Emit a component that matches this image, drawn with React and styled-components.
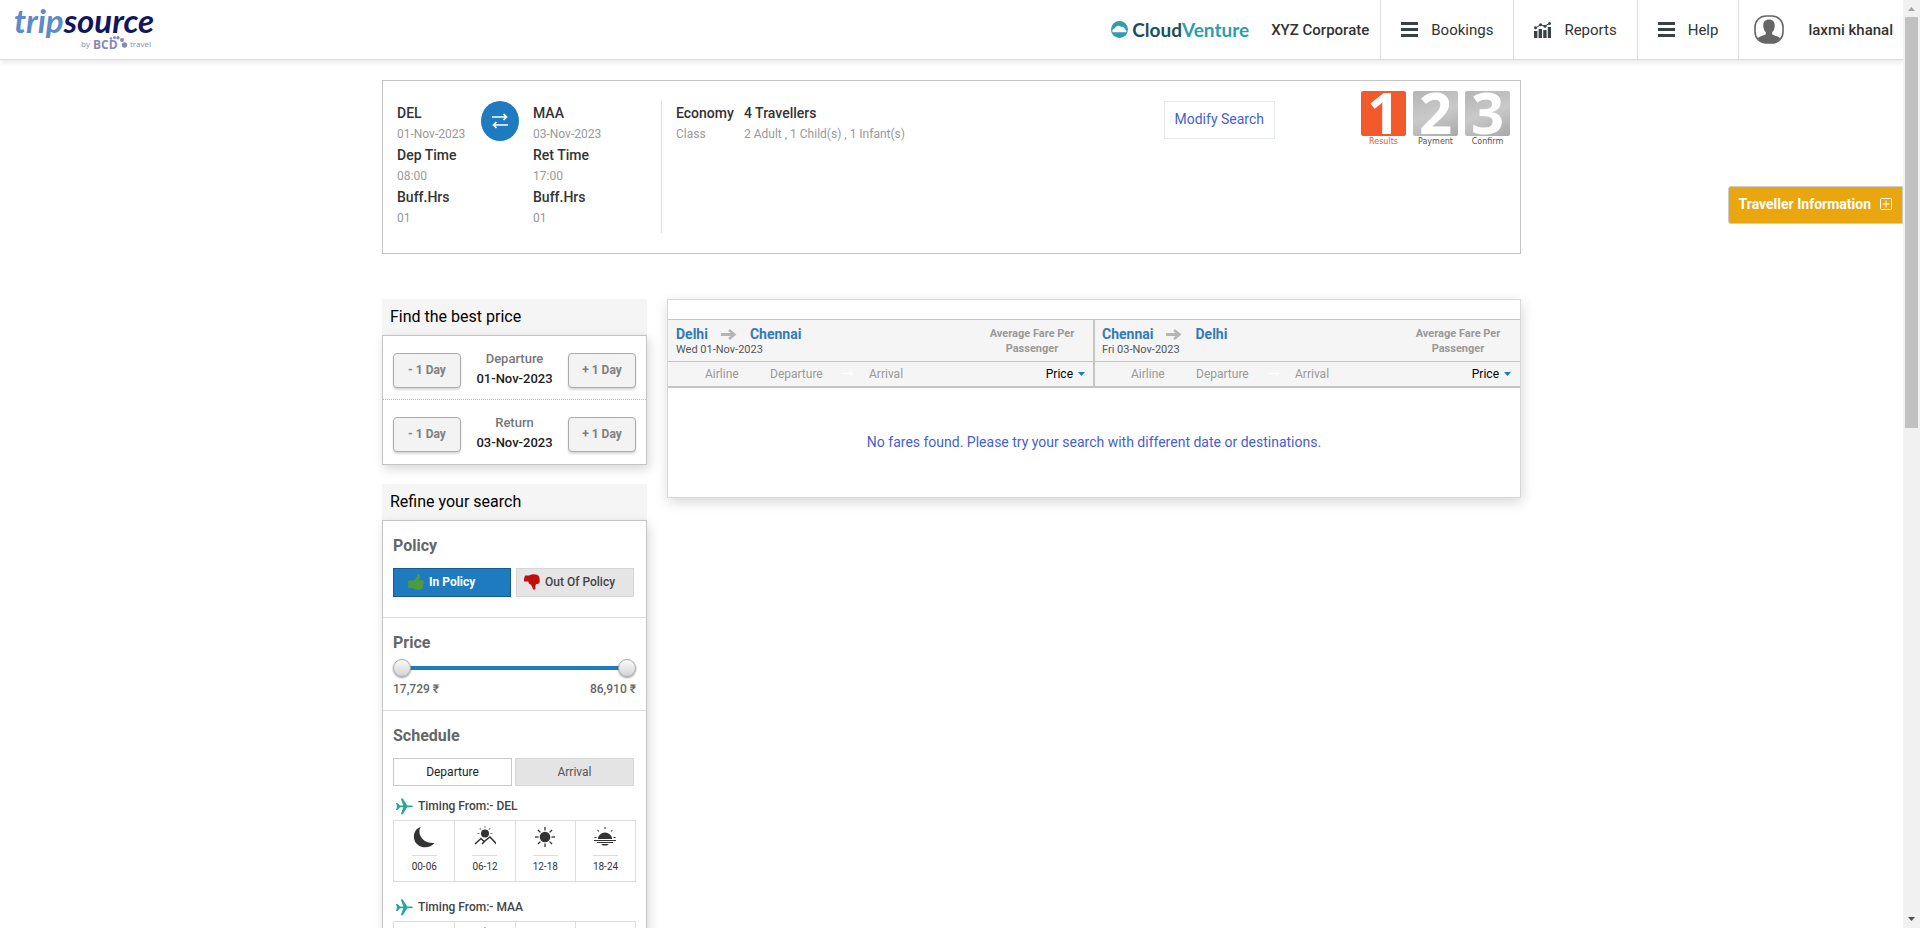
import React, { useState } from "react";
import styled, { createGlobalStyle, css } from "styled-components";

const Global = createGlobalStyle`
  *, *::before, *::after { box-sizing: border-box; }
  body {
    margin: 0;
    background: #fff;
    color: #333;
    font: 400 12px/20px Roboto, "Liberation Sans", sans-serif;
  }
  button, input { font: inherit; }
  button { cursor: pointer; }
  h2, h3, p, ol, dl, dd { margin: 0; padding: 0; }
`;

const Shell = styled.div`
  display: grid;
  grid-template-columns: minmax(0, 1fr) 17px;
  height: 100vh;
`;
const Page = styled.div`
  overflow-y: auto;
  scrollbar-width: none;
`;
const ScrollRail = styled.div`
  display: grid;
  grid-template-rows: 17px 46fr 54fr 17px;
  justify-items: center;
  align-items: center;
  background: #f1f1f1;
`;
const ScrollThumb = styled.div`
  width: 13px;
  height: 100%;
  background: #c1c1c1;
`;

/* Top bar */
const TopBar = styled.header`
  display: flex;
  align-items: stretch;
  height: 60px;
  border-bottom: 1px solid #ddd;
  box-shadow: 0 2px 6px rgba(0, 0, 0, 0.1);
`;
const Brand = styled.a`
  display: flex;
  flex-direction: column;
  width: 152px;
  margin: 3px auto 0 14px;
  color: #12155f;
  text-decoration: none;
  font: italic 700 33px/34px Lato, sans-serif;
`;
const BrandTrip = styled.span`
  color: #5b8bc9;
`;
const BrandBy = styled.span`
  display: flex;
  align-items: center;
  align-self: flex-end;
  gap: 3px;
  margin-right: 15px;
  color: #8789b5;
  font: 400 8px/14px "Open Sans", sans-serif;
`;
const Partner = styled.div`
  display: flex;
  align-items: center;
  gap: 4px;
  color: #1c4f5e;
  font: 700 19px/24px Lato, sans-serif;
`;
const PartnerAccent = styled.span`
  color: #2d9db0;
`;
const Company = styled.strong`
  align-self: center;
  padding: 0 11px 0 22px;
  font-size: 15px;
  font-weight: 500;
`;
const NavItem = styled.a`
  display: flex;
  align-items: center;
  gap: 13px;
  padding: 0 20px;
  border-left: 1px solid #ddd;
  color: #333;
  font-size: 15px;
  text-decoration: none;
`;
const UserItem = styled(NavItem)`
  gap: 24px;
  padding: 0 10px 0 15px;
  font-weight: 500;
`;

/* Page width */
const Main = styled.main`
  width: 100%;
  max-width: 1139px;
  margin: 20px auto 0;
`;

/* Trip summary */
const Summary = styled.section`
  display: flex;
  align-items: flex-start;
  min-height: 174px;
  padding: 20px 10px 20px 14px;
  border: 1px solid #c4c4c4;
`;
const Leg = styled.dl`
  flex: none;
  width: ${(p) => p.$width}px;
  padding-top: 2px;
  line-height: 21px;
`;
const Term = styled.dt`
  color: #333;
  font-size: 14px;
  font-weight: 500;
`;
const Detail = styled.dd`
  color: #999;
`;
const Swap = styled.div`
  display: grid;
  flex: none;
  place-items: center;
  width: 38px;
  height: 40px;
  margin: 0 14px 0 6px;
  border-radius: 50%;
  background: #1e7bc0;
`;
const Rule = styled.div`
  align-self: stretch;
  flex: none;
  width: 1px;
  margin-right: 14px;
  background: #ddd;
`;
const ModifyButton = styled.button`
  height: 38px;
  margin: 0 86px 0 auto;
  padding: 0 10px 2px;
  border: 1px solid #e7eaec;
  background: #fff;
  color: #4661cb;
  font-size: 14px;
  white-space: nowrap;
`;
const Steps = styled.ol`
  display: flex;
  gap: 7px;
  margin-top: -10px;
  list-style: none;
`;
const Step = styled.li`
  width: 45px;
  color: ${(p) => (p.$on ? "#f1592a" : "#555")};
  font: 400 8px/11px "DejaVu Sans", sans-serif;
  text-align: center;
`;
const StepNumber = styled.span`
  display: block;
  height: 45px;
  border-radius: 2px;
  background: ${(p) => (p.$on ? "#f4592b" : "linear-gradient(160deg, #b4b4b4, #c9c9c9 50%, #a9a9a9)")};
  color: #fff;
  font: 700 58px/41px "Open Sans", sans-serif;
`;

/* Floating tab on the right edge */
const TravellerTab = styled.button`
  position: fixed;
  top: 186px;
  right: 17px;
  display: flex;
  align-items: center;
  gap: 9px;
  height: 38px;
  padding: 0 10px 2px;
  border: 1px solid #ccc;
  border-radius: 3px 0 0 3px;
  background: #e9a60f;
  color: #fff;
  font-size: 14px;
  font-weight: 700;
`;

/* Columns */
const Columns = styled.div`
  display: grid;
  grid-template-columns: 265px minmax(0, 1fr);
  gap: 20px;
  align-items: start;
  margin-top: 45px;
`;
const PanelTitle = styled.h2`
  height: 36px;
  padding-left: 8px;
  background: #f5f5f5;
  color: #000;
  font-size: 16px;
  font-weight: 400;
  line-height: 36px;
`;
const Panel = styled.section`
  margin-bottom: 19px;
  border: 1px solid #c4c4c4;
  background: #fff;
  box-shadow: 2px 4px 10px rgba(0, 0, 0, 0.16);
`;
const DayRow = styled.div`
  display: flex;
  align-items: flex-start;
  justify-content: space-between;
  height: 63px;
  padding: 17px 10px 0;
  & + & {
    height: 65px;
    border-top: 1px dotted #bbb;
  }
`;
const DayButton = styled.button`
  width: 68px;
  height: 35px;
  padding: 0 0 2px;
  border: 1px solid #aaa;
  border-radius: 4px;
  background: #f3f3f3;
  box-shadow: 0 2px 2px rgba(0, 0, 0, 0.15);
  color: #808080;
  font-weight: 700;
`;
const DayText = styled.div`
  margin-top: -4px;
  color: #777;
  font-size: 13px;
  font-weight: 500;
  text-align: center;
`;
const DayDate = styled.div`
  color: #222;
`;

const Group = styled.section`
  padding: 15px 10px ${(p) => p.$bottom}px;
  & + & {
    border-top: 1px solid #ddd;
  }
`;
const GroupTitle = styled.h3`
  color: #666;
  font-size: 16px;
  font-weight: 700;
  line-height: 20px;
`;
const PolicyRow = styled.div`
  display: flex;
  gap: 5px;
  margin-top: 12px;
`;
const PolicyButton = styled.button`
  display: flex;
  align-items: center;
  justify-content: flex-start;
  gap: 5px;
  width: 118px;
  height: 29px;
  padding: 0 0 2px ${(p) => (p.$good ? 14 : 7)}px;
  border: 1px solid ${(p) => (p.$on ? "#155b90" : "#d6d6d6")};
  background: ${(p) => (p.$on ? "#1e7bc0" : "#e5e5e5")};
  color: ${(p) => (p.$on ? "#fff" : "#444")};
  font-weight: ${(p) => (p.$on ? 700 : 500)};
`;
const SliderBox = styled.div`
  display: grid;
  align-items: center;
  height: 18px;
  margin-top: 6px;
  background: linear-gradient(#1e7bc0, #1e7bc0) center / 227px 4px no-repeat;
`;
const Slider = styled.input`
  grid-area: 1 / 1;
  width: 100%;
  height: 18px;
  margin: 0;
  appearance: none;
  background: none;
  pointer-events: none;
  &::-webkit-slider-thumb {
    appearance: none;
    width: 18px;
    height: 18px;
    border: 1px solid #aaa;
    border-radius: 50%;
    background: linear-gradient(#fafafa, #d4d4d4);
    box-shadow: 0 1px 2px rgba(0, 0, 0, 0.4);
    pointer-events: auto;
  }
`;
const PriceRange = styled.div`
  display: flex;
  justify-content: space-between;
  margin-top: 2px;
  color: #666;
  font-weight: 500;
`;
const TabRow = styled.div`
  display: flex;
  gap: 3px;
  margin: 12px 0 10px;
`;
const Tab = styled.button`
  width: 119px;
  height: 28px;
  padding: 0;
  border: 1px solid ${(p) => (p.$on ? "#c8c8c8" : "#d8d8d8")};
  background: ${(p) => (p.$on ? "#fff" : "#e4e4e4")};
  color: ${(p) => (p.$on ? "#222" : "#555")};
`;
const TimingTitle = styled.div`
  display: flex;
  align-items: center;
  gap: 5px;
  padding-left: 3px;
  margin-bottom: 4px;
  color: #444;
  font-weight: 500;
`;
const Slots = styled.div`
  display: grid;
  grid-template-columns: repeat(4, 1fr);
  width: 243px;
  margin-bottom: 15px;
  border: 1px solid #ddd;
`;
const Slot = styled.button`
  display: flex;
  flex-direction: column;
  align-items: center;
  height: 60px;
  padding: 5px 0 0;
  border: 0;
  background: #fff;
  color: #333;
  font-size: 10px;
  & + & {
    border-left: 1px solid #ddd;
  }
`;
const SlotText = styled.span`
  width: 25px;
  margin-top: 6px;
  border-top: 1px solid #ddd;
  line-height: 21px;
  white-space: nowrap;
`;

/* Results */
const Results = styled.section`
  min-height: 199px;
  padding-top: 19px;
  border: 1px solid #d8d8d8;
  box-shadow: 1px 4px 12px rgba(0, 0, 0, 0.16);
`;
const FlightHeads = styled.div`
  display: grid;
  grid-template-columns: 1fr 1fr;
  border-top: 1px solid #c4c4c4;
  border-bottom: 2px solid #c4c4c4;
  background: #f5f5f5;
`;
const FlightHead = styled.div`
  & + & {
    box-shadow: -1px 0 #c4c4c4, inset 1px 0 #c4c4c4;
  }
`;
const RouteRow = styled.div`
  display: flex;
  justify-content: space-between;
  height: 42px;
  padding: 6px 19px 0 8px;
  border-bottom: 1px solid #c4c4c4;
`;
const Route = styled.div`
  display: flex;
  align-items: center;
  gap: 13px;
  color: #337ab7;
  font-size: 14px;
  font-weight: 700;
  line-height: 16px;
`;
const RouteDate = styled.div`
  color: #555;
  font-size: 11px;
  line-height: 16px;
`;
const FareNote = styled.div`
  width: 86px;
  color: #999;
  font-size: 11px;
  font-weight: 700;
  line-height: 15px;
  text-align: center;
`;
const SortRow = styled.div`
  display: grid;
  grid-template-columns: 65px 72px 27px 1fr auto;
  align-items: center;
  height: 24px;
  padding: 0 9px 0 37px;
`;
const Sort = styled.button`
  display: flex;
  align-items: center;
  gap: 5px;
  padding: 0;
  border: 0;
  background: none;
  color: #999;
  line-height: 24px;
  ${(p) => p.$on && css`color: #000;`}
`;
const Empty = styled.p`
  padding: 44px 0;
  color: #4661cb;
  font-size: 14px;
  text-align: center;
`;

const Bars = () => (
  <svg width="17" height="15" fill="#3a4143" aria-hidden="true">
    <path d="M0 0h17v3H0zM0 6h17v3H0zM0 12h17v3H0z" />
  </svg>
);
const ChartIcon = () => (
  <svg width="17" height="16" fill="#3a4143" aria-hidden="true">
    <path d="M0 9h3.400v7H0zM4.600 7H8v9H4.600zM9.200 8h3.400v8H9.200zM13.800 5H17v11h-3.200z" />
    <path d="M1.500 6 6.500 2.800 11 4 15.500 1.300" fill="none" stroke="#3a4143" />
    <circle cx="1.500" cy="5.800" r="1.500" /><circle cx="6.500" cy="2.800" r="1.500" />
    <circle cx="11" cy="4.200" r="1.500" /><circle cx="15.500" cy="1.500" r="1.500" />
  </svg>
);
const Avatar = () => (
  <svg width="30" height="29" aria-hidden="true">
    <rect x="1" y="1" width="28" height="27" rx="11" fill="#fff" stroke="#666" strokeWidth="1.600" />
    <path d="M15 4.500c3.600 0 5.700 2.300 5.700 5.700 0 1.200.1 1.600-.2 2.500-.5 2.600-1.500 3.600-2.300 4.600v2c2 1.600 6.300 1.700 8 4C24 26.500 21 28 18 28h-6c-3 0-6-1.500-8.200-4.700 1.700-2.300 6-2.400 8-4v-2c-.8-1-1.800-2-2.300-4.600-.3-.9-.2-1.300-.2-2.500 0-3.400 2.100-5.700 5.700-5.700z" fill="#666" />
  </svg>
);
const CloudMark = () => (
  <svg width="17" height="17" viewBox="0 0 17 17" aria-hidden="true">
    <circle cx="8.500" cy="8.500" r="8.500" fill="#2d9db0" />
    <path d="M1.500 11.200c-.6-2 .5-3.800 2.400-4 .7-2.600 4.600-3.400 6.100-1.200 2-.6 3.700.4 3.900 2.200 1.500.3 2 1.800 1.500 3z" fill="#fff" />
  </svg>
);
const BcdMark = () => (
  <svg width="34" height="14" fill="#8789b5" overflow="visible" aria-hidden="true">
    <text x="0" y="12" fontFamily="Open Sans, sans-serif" fontSize="12" fontWeight="700">BCD</text>
    <circle cx="18" cy="1.500" r="1.200" /><circle cx="21.500" cy=".6" r="1.500" />
    <circle cx="25" cy=".8" r="1.700" /><circle cx="29" cy="3" r="2" /><circle cx="31.500" cy="8" r="2.700" />
  </svg>
);
const SwapIcon = () => (
  <svg width="16" height="16" fill="none" stroke="#fff" strokeWidth="1.700" aria-hidden="true">
    <path d="M0 4h15M11.500 1l3 3-3 3M16 12H1M4.500 9l-3 3 3 3" />
  </svg>
);
const PlusBox = () => (
  <svg width="12" height="12" fill="none" stroke="#fff" aria-hidden="true">
    <rect x=".5" y=".5" width="11" height="11" rx="1" />
    <path d="M6 2.500v7M2.500 6h7" />
  </svg>
);
const Thumb = ({ down }) => (
  <svg width="16" height="16" viewBox="0 0 16 16" aria-hidden="true">
    {down ? (
      <path fill="#c00d0d" d="M1.200 1.500H5C7.500 0 10.500-.2 13 .8c2 .7 2.800 3 2.700 6.600-.1 2-1.800 2.600-3.500 2.500-1 1-.9 2.600-.7 4.300-.2 1.700-2 2-2.700.5-.5-2-1.300-4.300-3.800-5.300C4.500 8.800 4.400 8.300 4.500 7.500H0C-.2 5 .3 3 1.200 1.500z" />
    ) : (
      <path fill="#4f9a3c" d="M0 6.800 4.300 6v1C7.500 6 8.800 3.400 9.200.8 10.300-.4 12 .3 12 2.200c.1 1.500-.6 2.700-.8 4h3.300c1.500.2 1.600 1.700 1.100 2.500.3.900.1 1.700-.4 2.300.2.900 0 1.600-.6 2.100 0 1.600-.9 2.300-2.200 2.500-3 .5-5.500.1-7.900-1.500L.5 14.300C.1 12 0 9 0 6.800z" />
    )}
  </svg>
);
const Plane = () => (
  <svg width="17" height="17" viewBox="0 0 17 17" fill="#26a69a" aria-hidden="true">
    <path d="M0 5h1.500L4 7.600h3.300L4.800.5h2l4.400 7H16q1.400.9 0 1.800h-4.800l-4.400 7h-2l2.500-7H4L1.500 12H0l1-3.600z" />
  </svg>
);
const RouteArrow = () => (
  <svg width="16" height="11" fill="none" stroke="#b5b5b5" aria-hidden="true">
    <path d="M0 5.500h13" strokeWidth="3" />
    <path d="M8 1l5.500 4.500L8 10" strokeWidth="2.500" />
  </svg>
);
const FaintArrow = () => (
  <svg width="12" height="8" fill="none" stroke="#fff" aria-hidden="true">
    <path d="M0 3.500h11M8 1l3 2.500L8 6" />
  </svg>
);
const Caret = ({ size = 7, up, fill = "#1e7bc0" }) => (
  <svg width={size} height="4" fill={fill} aria-hidden="true">
    <path d={up ? `M0 4h${size}l-${size / 2}-4z` : `M0 0h${size}l-${size / 2} 4z`} />
  </svg>
);
const rays = [0, 45, 90, 135, 180, 225, 270, 315];
const slotIcons = {
  night: <path d="M8 1C4.500 4 6 17.500 21.500 17 17 23 6 23 2 15.500-1 9 2.500 2 8 1z" />,
  morning: (
    <g>
      <circle cx="11" cy="7.500" r="4" />
      {rays.slice(4).concat(0).map((a) => (
        <path key={a} d="M16.500 7.500h2" stroke="#777" transform={`rotate(${a} 11 7.500)`} />
      ))}
      <path d="M1 18l6-5.500 3 3 6-4.500 6.500 7M8 18l3-3" fill="none" stroke="#333" strokeWidth="1.500" />
    </g>
  ),
  noon: (
    <g>
      <circle cx="11" cy="11" r="5.300" />
      {rays.map((a) => (
        <path key={a} d="M17.500 11h3.500" stroke="#333" strokeWidth="1.300" transform={`rotate(${a} 11 11)`} />
      ))}
    </g>
  ),
  evening: (
    <g>
      <path d="M4 13a7 6.500 0 0 1 14 0zM0 14h22v1H0zM3 16h16v1H3zM7 18h8l-2 1.500H9z" />
      {rays.slice(4).concat(0).map((a) => (
        <path key={a} d="M19.500 11.500h2" stroke="#333" transform={`rotate(${a} 11 11.500)`} />
      ))}
    </g>
  ),
};
const SlotIcon = ({ kind }) => (
  <svg width="22" height="23" viewBox="0 0 22 23" fill="#333" aria-hidden="true">{slotIcons[kind]}</svg>
);

const slots = [["night", "00-06"], ["morning", "06-12"], ["noon", "12-18"], ["evening", "18-24"]];
const steps = ["Results", "Payment", "Confirm"];
const legs = [
  { from: "Delhi", to: "Chennai", date: "Wed 01-Nov-2023" },
  { from: "Chennai", to: "Delhi", date: "Fri 03-Nov-2023" },
];

function TripLeg({ code, date, label, time, width }) {
  return (
    <Leg $width={width}>
      <Term>{code}</Term><Detail>{date}</Detail>
      <Term>{label}</Term><Detail>{time}</Detail>
      <Term>Buff.Hrs</Term><Detail>01</Detail>
    </Leg>
  );
}

function DayPicker({ label, date }) {
  return (
    <DayRow>
      <DayButton>- 1 Day</DayButton>
      <DayText>{label}<DayDate>{date}</DayDate></DayText>
      <DayButton>+ 1 Day</DayButton>
    </DayRow>
  );
}

function Timing({ code }) {
  return (
    <>
      <TimingTitle><Plane />Timing From:- {code}</TimingTitle>
      <Slots>
        {slots.map(([kind, text]) => (
          <Slot key={kind}><SlotIcon kind={kind} /><SlotText>{text}</SlotText></Slot>
        ))}
      </Slots>
    </>
  );
}

export default function App() {
  const [inPolicy, setInPolicy] = useState(true);
  const [tab, setTab] = useState("Departure");
  return (
    <Shell>
      <Global />
      <Page>
        <TopBar>
          <Brand href="#home">
            <span><BrandTrip>trip</BrandTrip>source</span>
            <BrandBy>by <BcdMark /> travel</BrandBy>
          </Brand>
          <Partner><CloudMark /><span>Cloud<PartnerAccent>Venture</PartnerAccent></span></Partner>
          <Company>XYZ Corporate</Company>
          <NavItem href="#bookings"><Bars />Bookings</NavItem>
          <NavItem href="#reports"><ChartIcon />Reports</NavItem>
          <NavItem href="#help"><Bars />Help</NavItem>
          <UserItem href="#account"><Avatar />laxmi khanal</UserItem>
        </TopBar>

        <Main>
          <Summary>
            <TripLeg code="DEL" date="01-Nov-2023" label="Dep Time" time="08:00" width={78} />
            <Swap><SwapIcon /></Swap>
            <TripLeg code="MAA" date="03-Nov-2023" label="Ret Time" time="17:00" width={128} />
            <Rule />
            <Leg $width={68}><Term>Economy</Term><Detail>Class</Detail></Leg>
            <Leg $width={180}><Term>4 Travellers</Term><Detail>2 Adult , 1 Child(s) , 1 Infant(s)</Detail></Leg>
            <ModifyButton>Modify Search</ModifyButton>
            <Steps>
              {steps.map((name, i) => (
                <Step key={name} $on={i === 0}>
                  <StepNumber $on={i === 0}>{i + 1}</StepNumber>{name}
                </Step>
              ))}
            </Steps>
          </Summary>

          <Columns>
            <aside>
              <PanelTitle>Find the best price</PanelTitle>
              <Panel>
                <DayPicker label="Departure" date="01-Nov-2023" />
                <DayPicker label="Return" date="03-Nov-2023" />
              </Panel>

              <PanelTitle>Refine your search</PanelTitle>
              <Panel>
                <Group $bottom={20}>
                  <GroupTitle>Policy</GroupTitle>
                  <PolicyRow>
                    <PolicyButton $good $on={inPolicy} onClick={() => setInPolicy(true)}><Thumb />In Policy</PolicyButton>
                    <PolicyButton $on={!inPolicy} onClick={() => setInPolicy(false)}><Thumb down />Out Of Policy</PolicyButton>
                  </PolicyRow>
                </Group>
                <Group $bottom={11}>
                  <GroupTitle>Price</GroupTitle>
                  <SliderBox>
                    <Slider type="range" aria-label="Lowest price" min="17729" max="86910" defaultValue="17729" />
                    <Slider type="range" aria-label="Highest price" min="17729" max="86910" defaultValue="86910" />
                  </SliderBox>
                  <PriceRange><span>17,729 ₹</span><span>86,910 ₹</span></PriceRange>
                </Group>
                <Group $bottom={11}>
                  <GroupTitle>Schedule</GroupTitle>
                  <TabRow>
                    {["Departure", "Arrival"].map((name) => (
                      <Tab key={name} $on={tab === name} onClick={() => setTab(name)}>{name}</Tab>
                    ))}
                  </TabRow>
                  <Timing code="DEL" />
                  <Timing code="MAA" />
                </Group>
              </Panel>
            </aside>

            <Results>
              <FlightHeads>
                {legs.map((leg) => (
                  <FlightHead key={leg.from}>
                    <RouteRow>
                      <div>
                        <Route>{leg.from}<RouteArrow />{leg.to}</Route>
                        <RouteDate>{leg.date}</RouteDate>
                      </div>
                      <FareNote>Average Fare Per Passenger</FareNote>
                    </RouteRow>
                    <SortRow>
                      <Sort>Airline</Sort>
                      <Sort>Departure</Sort>
                      <FaintArrow />
                      <Sort>Arrival</Sort>
                      <Sort $on>Price<Caret /></Sort>
                    </SortRow>
                  </FlightHead>
                ))}
              </FlightHeads>
              <Empty>No fares found. Please try your search with different date or destinations.</Empty>
            </Results>
          </Columns>
        </Main>
        <TravellerTab>Traveller Information<PlusBox /></TravellerTab>
      </Page>
      <ScrollRail aria-hidden="true">
        <Caret up fill="#a3a3a3" />
        <ScrollThumb />
        <span />
        <Caret fill="#505050" />
      </ScrollRail>
    </Shell>
  );
}
